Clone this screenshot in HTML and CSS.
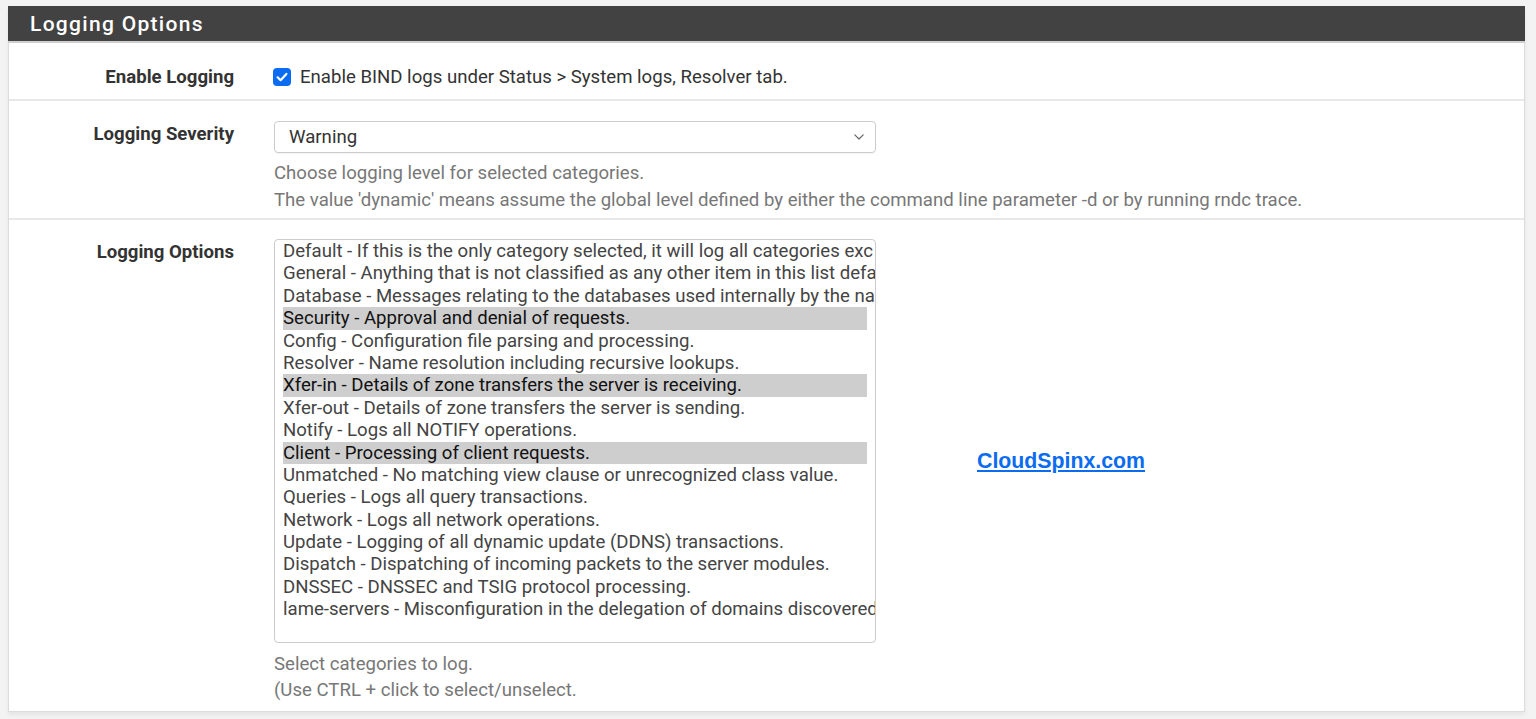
FILE: index.html
```html
<!DOCTYPE html>
<html>
<head>
<meta charset="utf-8">
<link rel="stylesheet" href="styles.css">
</head>
<body>
<div class="panel">
  <div class="panel-heading">Logging Options</div>
  <div class="row row-1">
    <div class="label">Enable Logging</div>
    <div class="content">
      <label class="check">
        <span class="box"><svg viewBox="0 0 18 18" width="18" height="18"><path d="M4.6 9.3 L7.6 12.2 L13.4 5.9" fill="none" stroke="#fff" stroke-width="2.2" stroke-linecap="round" stroke-linejoin="round"/></svg></span>
        <span>Enable BIND logs under Status &gt; System logs, Resolver tab.</span>
      </label>
    </div>
  </div>
  <div class="row row-2">
    <div class="label">Logging Severity</div>
    <div class="content">
      <div class="select">
        <span>Warning</span>
        <svg class="caret" viewBox="0 0 10 6" width="10" height="6"><path d="M0.8 0.8 L5 5 L9.2 0.8" fill="none" stroke="#666" stroke-width="1.2" stroke-linecap="round" stroke-linejoin="round"/></svg>
      </div>
      <div class="help">
        <div>Choose logging level for selected categories.</div>
        <div>The value 'dynamic' means assume the global level defined by either the command line parameter -d or by running rndc trace.</div>
      </div>
    </div>
  </div>
  <div class="row row-3">
    <div class="label">Logging Options</div>
    <div class="content">
      <div class="multi">
        <div class="opt">Default - If this is the only category selected, it will log all categories exc</div>
        <div class="opt">General - Anything that is not classified as any other item in this list defa</div>
        <div class="opt">Database - Messages relating to the databases used internally by the na</div>
        <div class="opt sel">Security - Approval and denial of requests.</div>
        <div class="opt">Config - Configuration file parsing and processing.</div>
        <div class="opt">Resolver - Name resolution including recursive lookups.</div>
        <div class="opt sel">Xfer-in - Details of zone transfers the server is receiving.</div>
        <div class="opt">Xfer-out - Details of zone transfers the server is sending.</div>
        <div class="opt">Notify - Logs all NOTIFY operations.</div>
        <div class="opt sel">Client - Processing of client requests.</div>
        <div class="opt">Unmatched - No matching view clause or unrecognized class value.</div>
        <div class="opt">Queries - Logs all query transactions.</div>
        <div class="opt">Network - Logs all network operations.</div>
        <div class="opt">Update - Logging of all dynamic update (DDNS) transactions.</div>
        <div class="opt">Dispatch - Dispatching of incoming packets to the server modules.</div>
        <div class="opt">DNSSEC - DNSSEC and TSIG protocol processing.</div>
        <div class="opt">lame-servers - Misconfiguration in the delegation of domains discovered</div>
      </div>
      <div class="help">
        <div>Select categories to log.</div>
        <div>(Use CTRL + click to select/unselect.</div>
      </div>
    </div>
    <a class="watermark" href="#">CloudSpinx.com</a>
  </div>
</div>
</body>
</html>
```
FILE: styles.css
```css
html, body {
  margin: 0;
  padding: 0;
}
body {
  background: #f3f3f3;
  font-family: Roboto, "Noto Sans", sans-serif;
  color: #555;
  padding: 6px 11px 0 8px;
  height: 719px;
  box-sizing: border-box;
  overflow: hidden;
}
.panel {
  background: #fff;
  border: 1px solid #dcdcdc;
  border-top: none;
  box-shadow: 0 3px 4px rgba(0,0,0,0.06);
}
.panel-heading {
  background: #424242;
  color: #fff;
  font-size: 21px;
  font-weight: 500;
  letter-spacing: 1.3px;
  height: 35px;
  line-height: 36px;
  padding-left: 22px;
  border-bottom: 2px solid #cfcfcf;
  margin-left: -1px;
  margin-right: -1px;
}
.row {
  display: flex;
  align-items: flex-start;
  border-bottom: 2px solid #e8e8e8;
}
.row:last-child {
  border-bottom: none;
}
.label {
  width: 225px;
  flex: none;
  text-align: right;
  font-weight: 700;
  font-size: 18.6px;
  line-height: 22px;
  color: #333;
  padding-right: 40px;
}
.content {
  width: 602px;
  flex: none;
  font-size: 18.6px;
  line-height: 22px;
}
.row-1 {
  padding: 23px 0 11px;
}
.check {
  display: flex;
  align-items: center;
  gap: 9px;
  color: #333;
  white-space: nowrap;
}
.box {
  width: 18px;
  height: 18px;
  border-radius: 4px;
  background: #0b6cf2;
  display: flex;
  margin-left: -1px;
}
.row-2 {
  padding: 20px 0 4px;
}
.row-2 .label {
  padding-top: 2px;
}
.select {
  height: 30px;
  border: 1px solid #cccccc;
  border-radius: 4px;
  display: flex;
  align-items: center;
  justify-content: space-between;
  padding: 0 11px 0 14px;
  color: #333;
  box-shadow: 0 1px 1px rgba(0,0,0,0.05);
}
.help {
  color: #777;
  line-height: 27px;
  white-space: nowrap;
  margin-top: 7px;
}
.row-3 {
  padding: 19px 0 8px;
}
.row-3 .label {
  padding-top: 2px;
}
.multi {
  border: 1px solid #cccccc;
  border-radius: 4px;
  padding: 0 8px;
  overflow: hidden;
  box-sizing: border-box;
  height: 404px;
}
.opt {
  height: 22.4px;
  line-height: 22.4px;
  white-space: nowrap;
  overflow: hidden;
  color: #444;
  width: 592px;
}
.opt.sel {
  background: #cecece;
  color: #111;
  width: 584px;
}
.row-3 .help {
  margin-top: 8px;
  line-height: 26px;
}
.watermark {
  align-self: center;
  margin-left: 101px;
  margin-top: -20px;
  font-family: "Liberation Sans", Arial, sans-serif;
  font-weight: 700;
  font-size: 21.3px;
  color: #0a6cf0;
  text-decoration: underline;
}
```
